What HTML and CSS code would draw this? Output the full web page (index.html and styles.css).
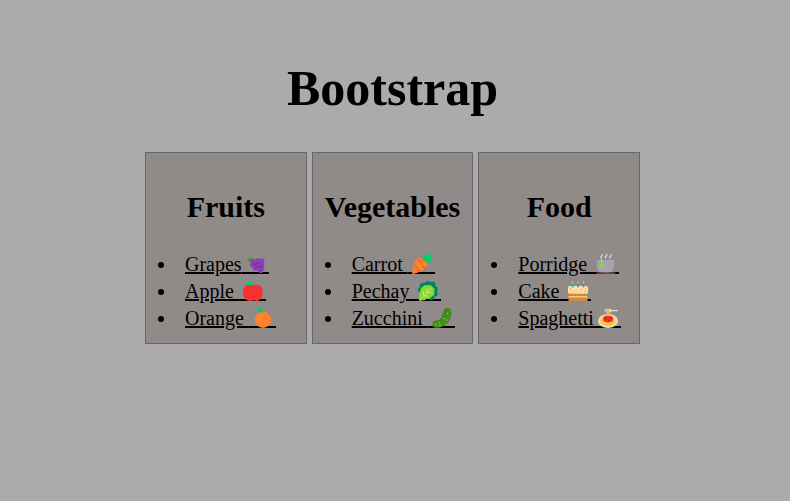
FILE: index.html
```html
<!DOCTYPE html>
<html lang="en">
<head>
<meta charset="utf-8">
<meta name="viewport" content="width=device-width, initial-scale=1">
<title>Bootstrap</title>
<link rel="stylesheet" href="styles.css">
</head>
<body>
<main class="page">
  <h1 class="title">Bootstrap</h1>
  <div class="cards">
    <section class="card">
      <h2 class="card-title">Fruits</h2>
      <ul class="list">
        <li><a href="#grapes">Grapes<svg class="icon" viewBox="0 0 27 20" aria-hidden="true">
          <path d="M13.2 0h1.700c.1 2 0 3.600-.6 6h-1.500c.7-2 .7-4 .4-6z" fill="#7cb342"/>
          <path d="M5 6c2-2.800 6-2.800 8.600.2C11.500 9 7 8.800 5 6z" fill="#5c8a35"/>
          <g fill="#8e3fb5"><circle cx="11.500" cy="8" r="2.700"/><circle cx="15.500" cy="6.500" r="2.500"/><circle cx="20" cy="7" r="2.600"/><circle cx="10.500" cy="11" r="2.500"/><circle cx="14.500" cy="11" r="3"/><circle cx="19.500" cy="11" r="2.900"/><circle cx="13" cy="14.500" r="2.400"/><circle cx="17" cy="14.800" r="2.500"/><circle cx="20" cy="14.500" r="2.400"/><circle cx="18.800" cy="17" r="2.300"/></g>
          <path d="M11 10q2 1.500 4-.5M15 9q2 1 3-1M13 13q2 1 3.500-.5M17.500 12.500q1.500 1 3.500-.5M17 16.500q1 .5 2-1" fill="none" stroke="#652b8b" stroke-width=".9"/>
        </svg></a></li>
        <li><a href="#apple">Apple <svg class="icon" viewBox="0 0 27 20" aria-hidden="true">
          <path d="M14 4.500C11.600 3.400 4 2.700 4 11c0 5 3 9 6.500 9 1.500 0 2-.5 3.500-.5s2 .5 3.500.5c3.500 0 6.200-4 6.200-9 0-8.300-7.300-7.600-9.700-6.500z" fill="#f8312f"/>
          <path d="M5.500 0C9 .2 13 .2 14 4.300 10 4.800 7 3.700 5.500 0z" fill="#00d26a"/>
          <path d="M13.500 4.500q-.5-1.800-2-2.500" fill="none" stroke="#16934b" stroke-width=".8"/>
        </svg></a></li>
        <li><a href="#orange">Orange <svg class="icon" viewBox="0 0 27 20" aria-hidden="true">
          <circle cx="14" cy="11.800" r="8.200" fill="#ff822d"/>
          <path d="M7 .5C10.500-.3 13.500.5 14.500 4.300 11 5 8.500 3.500 7 .5z" fill="#00c968"/>
        </svg></a></li>
      </ul>
    </section>
    <section class="card">
      <h2 class="card-title">Vegetables</h2>
      <ul class="list">
        <li><a href="#carrot">Carrot <svg class="icon" viewBox="0 0 27 20" aria-hidden="true">
          <path d="M4.200 19.500C4.500 14 6.500 7 9.500 4.500c4.500-2.500 11.500 2.500 9.500 7.500-2 4-9.500 7-14 8-.5.1-.9 0-.8-.5z" fill="#ff822d"/>
          <path d="M10 6l3.500 2.500M14.500 12.500l3 2M6.500 11.500l3.500 2.300M14 5l2 1.500M9.500 15.500l2 1.500" stroke="#e55b24" stroke-width="1.100" stroke-linecap="round"/>
          <path d="M15.500 5.500V2.500Q16 .5 18 1q1-1.200 2.500-.8L23.500.5V5q.3 3-2 3-1 1.400-3.500.3z" fill="#00d26a"/>
        </svg></a></li>
        <li><a href="#pechay">Pechay <svg class="icon" viewBox="0 0 27 20" aria-hidden="true">
          <g fill="#008463"><circle cx="14" cy="3.500" r="3.500"/><circle cx="9" cy="5" r="3.300"/><circle cx="7" cy="9" r="3"/><circle cx="18.500" cy="3.800" r="3"/><circle cx="20.700" cy="8" r="3"/><circle cx="20.500" cy="12.500" r="3"/><circle cx="17.500" cy="16" r="3"/></g>
          <path d="M5 19c-.5-2 .6-3.500.3-5.500-.5-2 1-3 1.200-5C7 6 9 6 10 5c1.300-1.700 3-1 4.500-.7 1.700-1 3.500.2 4.200 2 2 1 2.200 3 1.500 4.700.7 2.500-.8 4-2.700 4.700-1 2.300-3 2.500-5 2-2 2.300-4 1-5.500 2-1 .7-1.700.3-2-.7z" fill="#86d72f"/>
          <path d="M6 18.500L17.500 7M9.500 15V10M9.500 15H14M13 11.500V7M13 11.500h4.500" fill="none" stroke="#c7ea65" stroke-width="1"/>
        </svg></a></li>
        <li><a href="#zucchini">Zucchini <svg class="icon" viewBox="0 0 27 20" aria-hidden="true">
          <path d="M15.300 3.500C16 .6 18.500-.2 20.500.2c4 .8 3.700 6.800 1.500 11.300-2.500 5-8 8.500-13.500 8.300-3.200-.1-4.800-2.300-4.200-4.300.5-2 2-2.800 4.500-3 4.500-.5 5.500-4.500 6.500-9z" fill="#44911b"/>
          <path d="M15.300 3.500C16 .6 18.500-.2 20.500.2c1.500.3 2.500 1.300 2.800 2.800-2-1.200-3.500-1-4 .8-1 5-3 9.500-8 11-3 .8-5 .3-7-.1.700-1.400 2-2 4.500-2.200 4.500-.5 5.500-4.500 6.500-9z" fill="#3b8119" opacity=".4"/>
          <g fill="#9bcb65"><circle cx="19.500" cy="5.500" r=".7"/><circle cx="16" cy="10.500" r=".7"/><circle cx="18.500" cy="12" r=".7"/><circle cx="11" cy="14.500" r=".7"/><circle cx="12" cy="17" r=".7"/><circle cx="7.500" cy="16.500" r=".7"/></g>
        </svg></a></li>
      </ul>
    </section>
    <section class="card">
      <h2 class="card-title">Food</h2>
      <ul class="list">
        <li><a href="#porridge">Porridge <svg class="icon" viewBox="0 0 27 20" aria-hidden="true">
          <path d="M5 6h17v6c0 4-2.500 7-6 7h-5c-3.500 0-6-3-6-7z" fill="#a5a3b5"/>
          <path d="M4 18.300h20l-1.500 1.700h-17z" fill="#6d4534"/>
          <path d="M9.500 5v4" stroke="#dceac8" stroke-width=".8"/>
          <path d="M7.200 9.500L9.200 7.800h.7l2 1.700v3.700H7.200z" fill="#86d72f"/>
          <path d="M9 4q-.5-1.500.8-2l.5-1.500M13.500 4q-.5-1.500.8-2l.5-1.500M18 4q-.5-1.500.8-2l.5-1.500" fill="none" stroke="#e1e1e4" stroke-width="1.200" stroke-linecap="round"/>
        </svg></a></li>
        <li><a href="#cake">Cake <svg class="icon" viewBox="0 0 27 20" aria-hidden="true">
          <path d="M4.500 11h19v9h-19z" fill="#d3883e"/>
          <path d="M4.500 15h19v1.500h-19z" fill="#f3c989"/>
          <path d="M4 7q0-2 2-2h16q2 0 2 2v4.500q-1.500 2.500-3.300.7-1.700 1.600-3.300 0-1.700 1.600-3.400 0-1.600 1.600-3.300 0-1.700 1.600-3.300 0Q5 13.500 4 11.500z" fill="#ffdfa4"/>
          <path d="M8.500 2v4.500M14 2v4.500M19.500 2v4.500" stroke="#18a6cc" stroke-width="1.500"/>
          <path d="M8.500 0q1.600 1.700 0 3-1.600-1.300 0-3zM14 0q1.600 1.700 0 3-1.600-1.300 0-3zM19.500 0q1.600 1.700 0 3-1.600-1.300 0-3z" fill="#ffc43a"/>
          <g fill="#f05375"><circle cx="6.500" cy="8" r=".6"/><circle cx="12" cy="10" r=".6"/><circle cx="17" cy="8" r=".6"/><circle cx="21" cy="10.500" r=".6"/></g>
          <g fill="#62b8be"><circle cx="9" cy="10.300" r=".5"/><circle cx="15.500" cy="10.700" r=".5"/><circle cx="21.500" cy="7.500" r=".5"/></g>
        </svg></a></li>
        <li><a href="#spaghetti">Spaghetti<svg class="icon" viewBox="0 0 27 20" aria-hidden="true">
          <ellipse cx="14" cy="13" rx="10" ry="7" fill="#dedee2"/>
          <ellipse cx="14" cy="12.700" rx="8.200" ry="5.800" fill="#ffd53b"/>
          <path d="M7 12q1 5 7 5 5 0 7-4M8 15q6 4 12-1" fill="none" stroke="#efb729" stroke-width=".8"/>
          <path d="M9 11q0-3 3-3.200 2-1 4 0 3 .2 3.300 3.200.5 2.500-2.500 3-2.700 1.200-5.300 0Q8.500 13.500 9 11z" fill="#f8312f"/>
          <g fill="#8e321e"><circle cx="12" cy="10.500" r="1"/><circle cx="16.500" cy="10" r="1"/><circle cx="14.500" cy="12.500" r="1"/></g>
          <path d="M10.500 1h6.800v1H24v1.300h-6.700v.9h-6.800V3.400h5V2.800h-5v-.6h5v-.5h-5z" fill="#d9dce0"/>
          <path d="M12.800.5h2.700V8h-2.700z" fill="#f5ce42"/>
          <path d="M14 .5V8" stroke="#c99c25" stroke-width=".5"/>
        </svg></a></li>
      </ul>
    </section>
  </div>
</main>
</body>
</html>
```
FILE: styles.css
```css
* {
  box-sizing: border-box;
}

body {
  margin: 0;
  background: #ababab;
  color: #000;
  font-family: "Liberation Serif", "Times New Roman", serif;
}

.page {
  padding: 59px 5px 40px 0;
}

.title {
  margin: 0 0 35px;
  font-size: 50px;
  text-align: center;
}

.cards {
  display: grid;
  grid-template-columns: repeat(3, 1fr);
  gap: 5px;
  max-width: 495px;
  margin: 0 auto;
}

.card {
  padding: 12px 0 11px;
  border: 1px solid #696666;
  background: #908a89;
}

.card-title {
  margin: 25px 0 27px;
  font-size: 30px;
  text-align: center;
}

.list {
  margin: 0;
  padding-left: 31px;
  font-size: 20px;
  line-height: 27px;
}

.list a {
  margin-left: 8px;
  color: inherit;
  white-space: nowrap;
  text-decoration: underline;
  text-decoration-thickness: 2px;
  text-underline-offset: 1px;
}

/* The link's underline carries on beneath the icon. */
.icon {
  width: 27px;
  height: 20px;
  vertical-align: -3px;
  background: linear-gradient(#000, #000) left bottom / 100% 2px no-repeat;
}
```
